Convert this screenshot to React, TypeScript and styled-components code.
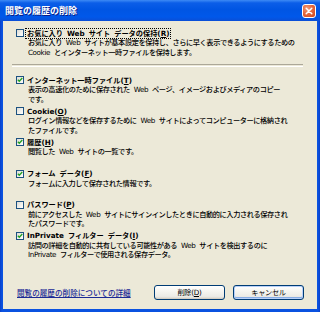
import React from "react";
import styled, { createGlobalStyle } from "styled-components";

const FONT = `"DejaVu Sans", "Noto Sans CJK JP", sans-serif`;

const Global = createGlobalStyle`
  html, body { margin: 0; padding: 0; background: #ffffff; }
  body { width: 320px; height: 312px; overflow: hidden; }
  #root { width: 320px; height: 312px; }
`;

const Window = styled.div`
  width: 320px;
  height: 312px;
  box-sizing: border-box;
  display: flex;
  flex-direction: column;
  padding: 0 3px 3px;
  background: linear-gradient(to right, #0a3fc8 0px, #0a52e0 2px, #0a52e0 calc(100% - 2px), #0a3fc8 100%);
  font-family: ${FONT};
`;

const TitleBar = styled.div`
  height: 21px;
  margin: 0 -3px;
  padding: 0 4px 0 5px;
  display: flex;
  align-items: center;
  justify-content: space-between;
  background: linear-gradient(
    to bottom,
    #3d8af5 0%,
    #0b5ee8 14%,
    #0055e3 45%,
    #0058ea 80%,
    #0a4ed6 100%
  );
`;

const Title = styled.div`
  color: #ffffff;
  font-size: 9px;
  font-weight: bold;
  text-shadow: 1px 1px 0 #0a1c86;
  white-space: nowrap;
`;

const CloseButton = styled.div`
  width: 14px;
  height: 14px;
  box-sizing: border-box;
  border: 1px solid #ffffff;
  border-radius: 3px;
  background: radial-gradient(circle at 35% 30%, #f29c7a 0%, #e4693f 45%, #cc451c 100%);
  display: flex;
  align-items: center;
  justify-content: center;
`;

const Body = styled.div`
  flex: 1;
  background: #ece9d8;
  display: flex;
  flex-direction: column;
  padding: 7px 13px 9px 13px;
  color: #000000;
`;

const Item = styled.div`
  display: flex;
  flex-direction: column;
  min-height: 29px;
`;

const Head = styled.div`
  height: 10px;
  display: flex;
  align-items: center;
`;

const Box = styled.div`
  width: 8px;
  height: 8px;
  box-sizing: border-box;
  border: 1px solid #1c5180;
  background: linear-gradient(135deg, #dcdcd7 0%, #f2f2ee 60%, #ffffff 100%);
  margin-right: 3px;
  flex: none;
  display: flex;
  align-items: center;
  justify-content: center;
`;

const Label = styled.span<{ $focus?: boolean }>`
  font-size: 7.2px;
  font-weight: bold;
  word-spacing: 1.5px;
  white-space: nowrap;
  line-height: 9px;
  padding: 0 1px;
  margin-left: -1px;
  outline: ${(p) => (p.$focus ? "1px dotted #000000" : "none")};
`;

const Desc = styled.div`
  padding-left: 12px;
  font-size: 7.2px;
  font-weight: 500;
  line-height: 9.5px;
  letter-spacing: -0.4px;
  word-spacing: 2px;
  white-space: nowrap;
`;

const Separator = styled.div`
  height: 1px;
  margin: 7px 1px 8px -4px;
  border-top: 1px solid #aca899;
  border-bottom: 1px solid #ffffff;
`;

const List = styled.div`
  display: flex;
  flex-direction: column;
  gap: 2.2px;
`;

const Footer = styled.div`
  margin-top: auto;
  display: flex;
  align-items: center;
  padding-left: 1px;
`;

const Link = styled.a`
  color: #1a2a96;
  text-decoration: underline;
  font-size: 7.6px;
  font-weight: 500;
  white-space: nowrap;
  cursor: pointer;
`;

const Buttons = styled.div`
  margin-left: auto;
  display: flex;
  gap: 8px;
`;

const Button = styled.button<{ $default?: boolean }>`
  width: 71px;
  height: 15px;
  padding: 0;
  box-sizing: border-box;
  border: 1px solid #003c74;
  border-radius: 3px;
  background: linear-gradient(to bottom, #ffffff 0%, #f5f4ef 45%, #ecebe6 80%, #d6d0c5 100%);
  font-family: ${FONT};
  font-size: 7.2px;
  letter-spacing: -0.3px;
  color: #000000;
  line-height: 13px;
  box-shadow: ${(p) =>
    p.$default
      ? "inset 0 0 0 1px #b8d0f8, inset 0 -1px 0 1px #89ade4"
      : "inset 0 -1px 0 #d6d0c5"};
`;

const Check = () => (
  <svg width="6" height="6" viewBox="0 0 6 6">
    <path d="M0.8 2.7 L2.3 4.3 L5.3 1.0" stroke="#21a121" strokeWidth="1.3" fill="none" />
  </svg>
);

const CloseX = () => (
  <svg width="8" height="8" viewBox="0 0 8 8">
    <path d="M1.2 1.2 L6.8 6.8 M6.8 1.2 L1.2 6.8" stroke="#ffffff" strokeWidth="1.5" strokeLinecap="round" />
  </svg>
);

type Entry = {
  label: string;
  key: string;
  checked: boolean;
  focus?: boolean;
  desc: string[];
};

const entries: Entry[] = [
  {
    label: "インターネット一時ファイル",
    key: "T",
    checked: true,
    desc: ["表示の高速化のために保存された Web ページ、イメージおよびメディアのコピー", "です。"],
  },
  {
    label: "Cookie",
    key: "O",
    checked: false,
    desc: ["ログイン情報などを保存するために Web サイトによってコンピューターに格納され", "たファイルです。"],
  },
  { label: "履歴", key: "H", checked: true, desc: ["閲覧した Web サイトの一覧です。"] },
  { label: "フォーム データ", key: "F", checked: true, desc: ["フォームに入力して保存された情報です。"] },
  {
    label: "パスワード",
    key: "P",
    checked: false,
    desc: ["前にアクセスした Web サイトにサインインしたときに自動的に入力される保存され", "たパスワードです。"],
  },
  {
    label: "InPrivate フィルター データ",
    key: "I",
    checked: true,
    desc: ["訪問の詳細を自動的に共有している可能性がある Web サイトを検出するのに", "InPrivate フィルターで使用される保存データ。"],
  },
];

const first: Entry = {
  label: "お気に入り Web サイト データの保持",
  key: "R",
  checked: false,
  focus: true,
  desc: [
    "お気に入り Web サイトが基本設定を保持し、さらに早く表示できるようにするための",
    "Cookie とインターネット一時ファイルを保持します。",
  ],
};

const Option = ({ e }: { e: Entry }) => (
  <Item>
    <Head>
      <Box>{e.checked && <Check />}</Box>
      <Label $focus={e.focus}>
        {e.label}(<u>{e.key}</u>)
      </Label>
    </Head>
    {e.desc.map((d, i) => (
      <Desc key={i}>{d}</Desc>
    ))}
  </Item>
);

export default function App() {
  return (
    <>
      <Global />
      <Window>
        <TitleBar>
          <Title>閲覧の履歴の削除</Title>
          <CloseButton>
            <CloseX />
          </CloseButton>
        </TitleBar>
        <Body>
          <Option e={first} />
          <Separator />
          <List>
            {entries.map((e) => (
              <Option key={e.key} e={e} />
            ))}
          </List>
          <Footer>
            <Link>閲覧の履歴の削除についての詳細</Link>
            <Buttons>
              <Button>
                削除(<u>D</u>)
              </Button>
              <Button $default>キャンセル</Button>
            </Buttons>
          </Footer>
        </Body>
      </Window>
    </>
  );
}
